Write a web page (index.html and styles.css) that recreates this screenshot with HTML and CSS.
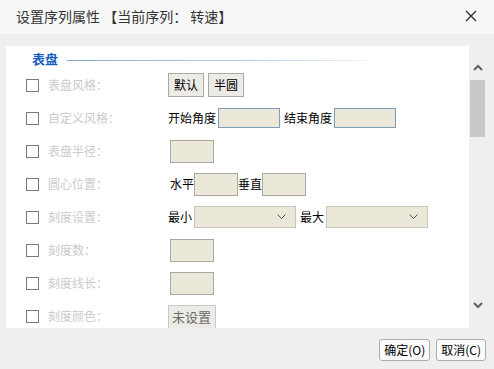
FILE: index.html
```html
<!DOCTYPE html>
<html lang="zh-CN">
<head>
<meta charset="utf-8">
<title>设置序列属性</title>
<link rel="stylesheet" href="styles.css">
</head>
<body>
<div class="dialog">
  <div class="titlebar">
    <span class="title">设置序列属性 【当前序列： 转速】</span>
    <svg class="close" width="12" height="12" viewBox="0 0 12 12"><path d="M1 1L11 11M11 1L1 11" stroke="#333" stroke-width="1.4" fill="none"/></svg>
  </div>
  <div class="content">
    <div class="scrollarea">
      <div class="panel">
        <div class="section-head"><span class="section-title">表盘</span><span class="section-line"></span></div>
        <div class="row">
          <span class="check"></span><span class="label">表盘风格：</span>
          <div class="ctrl"><span class="btn">默认</span><span class="btn">半圆</span></div>
        </div>
        <div class="row">
          <span class="check"></span><span class="label">自定义风格：</span>
          <div class="ctrl"><span class="txt">开始角度</span><span class="input wide blue"></span><span class="txt gap">结束角度</span><span class="input wide blue"></span></div>
        </div>
        <div class="row">
          <span class="check"></span><span class="label">表盘半径：</span>
          <div class="ctrl"><span class="input small off"></span></div>
        </div>
        <div class="row">
          <span class="check"></span><span class="label">圆心位置：</span>
          <div class="ctrl"><span class="txt off">水平</span><span class="input small"></span><span class="txt">垂直</span><span class="input small"></span></div>
        </div>
        <div class="row">
          <span class="check"></span><span class="label">刻度设置：</span>
          <div class="ctrl"><span class="txt">最小</span><span class="select"><svg width="9" height="6" viewBox="0 0 9 6"><path d="M0.5 0.5L4.5 4.5L8.5 0.5" stroke="#555" stroke-width="1" fill="none"/></svg></span><span class="txt gap">最大</span><span class="select"><svg width="9" height="6" viewBox="0 0 9 6"><path d="M0.5 0.5L4.5 4.5L8.5 0.5" stroke="#555" stroke-width="1" fill="none"/></svg></span></div>
        </div>
        <div class="row">
          <span class="check"></span><span class="label">刻度数：</span>
          <div class="ctrl"><span class="input small off"></span></div>
        </div>
        <div class="row">
          <span class="check"></span><span class="label">刻度线长：</span>
          <div class="ctrl"><span class="input small off"></span></div>
        </div>
        <div class="row">
          <span class="check"></span><span class="label">刻度颜色：</span>
          <div class="ctrl"><span class="btn color">未设置</span></div>
        </div>
      </div>
      <div class="scrollbar">
        <svg class="arrow" width="10" height="8" viewBox="0 0 10 8"><path d="M1 6L5 2L9 6" stroke="#606060" stroke-width="2" fill="none"/></svg>
        <div class="thumb"></div>
        <div class="track"></div>
        <svg class="arrow" width="10" height="8" viewBox="0 0 10 8"><path d="M1 2L5 6L9 2" stroke="#606060" stroke-width="2" fill="none"/></svg>
      </div>
    </div>
    <div class="footer">
      <span class="dbtn">确定(O)</span><span class="dbtn">取消(C)</span>
    </div>
  </div>
</div>
</body>
</html>
```
FILE: styles.css
```css
html, body {
  margin: 0;
  padding: 0;
}
body {
  width: 494px;
  height: 369px;
  overflow: hidden;
  font-family: "Noto Sans CJK SC", "Noto Sans", sans-serif;
  font-size: 12px;
  color: #000;
  background: #f0efed;
}
.dialog {
  display: flex;
  flex-direction: column;
  height: 369px;
}
.titlebar {
  height: 34px;
  background: #f7f7f7;
  display: flex;
  align-items: center;
  justify-content: space-between;
  padding: 0 17px 0 16px;
  box-sizing: border-box;
}
.title {
  font-size: 14px;
  color: #333;
  line-height: 14px;
  margin-top: -3px;
}
.close {
  margin-top: -3px;
}
.content {
  flex: 1;
  display: flex;
  flex-direction: column;
}
.scrollarea {
  display: flex;
  margin: 12px 0 0 6px;
  height: 282px;
}
.panel {
  width: 463px;
  height: 282px;
  background: #fff;
  overflow: hidden;
  box-sizing: border-box;
}
.section-head {
  height: 22px;
  display: flex;
  align-items: center;
  padding-left: 26px;
  padding-top: 3px;
  box-sizing: border-box;
}
.section-title {
  color: #1a5fbf;
  font-weight: bold;
  font-size: 13px;
  line-height: 13px;
}
.section-line {
  margin-left: 9px;
  width: 300px;
  height: 1px;
  margin-top: 4px;
  background: linear-gradient(to right, #7faad2, #b6cfe6 60%, #eef3f8);
}
.row {
  height: 33px;
  display: flex;
  align-items: center;
  padding-left: 20px;
  padding-top: 1px;
  box-sizing: border-box;
}
.check {
  width: 11px;
  height: 11px;
  border: 1px solid #7a7a7a;
  flex: none;
}
.label {
  margin-left: 9px;
  width: 120px;
  flex: none;
  color: #cbcbcb;
  font-size: 12px;
  line-height: 14px;
}
.ctrl {
  display: flex;
  align-items: center;
}
.txt {
  line-height: 14px;
}
.txt.gap {
  margin-left: 4px;
}
.txt.off {
  margin-left: 2px;
}
.btn {
  height: 22px;
  border: 1px solid #a9a9a9;
  background: #ecebe6;
  padding: 0 5px;
  display: flex;
  align-items: center;
  line-height: 14px;
  margin-right: 4px;
  margin-top: -1px;
}
.btn.color {
  color: #6a6a6a;
  font-size: 13px;
  padding: 0 4px 0 3px;
  height: 22px;
  border-color: #c9c9c9;
  margin-top: 2px;
}
.input {
  display: block;
  background: #ebe8da;
  border: 1px solid #aaa8a0;
  box-sizing: border-box;
}
.input.wide {
  width: 62px;
  height: 20px;
  margin-left: 2px;
}
.input.blue {
  border-color: #7f9db9;
}
.input.small {
  width: 44px;
  height: 23px;
}
.input.off {
  margin-left: 2px;
}
.select {
  width: 102px;
  height: 22px;
  background: #ebe8da;
  border: 1px solid #c8c6bc;
  box-sizing: border-box;
  display: flex;
  align-items: center;
  justify-content: flex-end;
  padding-right: 9px;
  margin-left: 2px;
}
.scrollbar {
  width: 17px;
  height: 282px;
  display: flex;
  flex-direction: column;
  align-items: center;
  padding: 18px 0 19px 0;
  box-sizing: border-box;
}
.arrow {
  flex: none;
}
.thumb {
  width: 15px;
  height: 57px;
  background: #c8c8c8;
  margin-top: 8px;
  flex: none;
}
.track {
  flex: 1;
}
.footer {
  display: flex;
  justify-content: flex-end;
  gap: 6px;
  padding: 11px 8px 0 0;
}
.dbtn {
  height: 22px;
  box-sizing: border-box;
  border: 1px solid #adadad;
  border-radius: 3px;
  background: #fbfbfb;
  padding: 0 4px;
  display: flex;
  align-items: center;
  font-size: 12px;
  line-height: 14px;
  color: #000;
}
```
